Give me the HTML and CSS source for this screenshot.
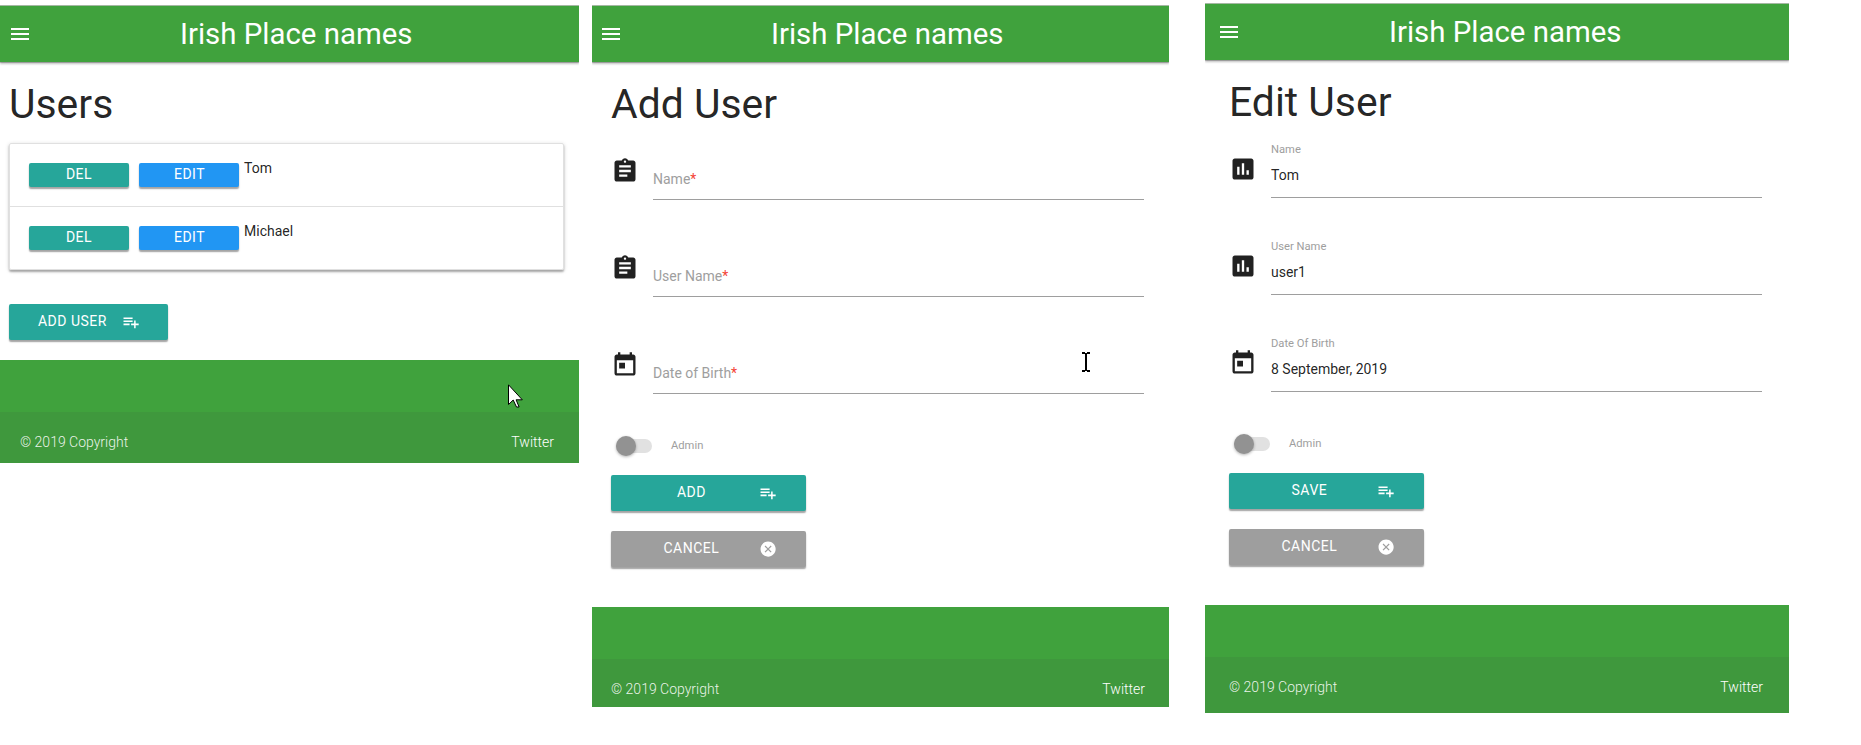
FILE: index.html
```html
<!DOCTYPE html>
<html lang="en">
<head>
<meta charset="utf-8">
<title>Irish Place names</title>
<link rel="stylesheet" href="styles.css">
</head>
<body>
<svg class="sprite" aria-hidden="true">
  <symbol id="menu" viewBox="0 0 24 24"><path d="M3 18h18v-2H3v2zm0-5h18v-2H3v2zm0-7v2h18V6H3z"/></symbol>
  <symbol id="playlist" viewBox="0 0 24 24"><path d="M14 10H2v2h12v-2zm0-4H2v2h12V6zm4 8v-4h-2v4h-4v2h4v4h2v-4h4v-2h-4zM2 16h8v-2H2v2z"/></symbol>
  <symbol id="cancel" viewBox="0 0 24 24"><path d="M12 2C6.47 2 2 6.47 2 12s4.47 10 10 10 10-4.47 10-10S17.53 2 12 2zm4.6 13.5L15.5 16.6 12 13.1 8.5 16.6 7.4 15.5 10.9 12 7.4 8.5 8.5 7.4 12 10.9 15.5 7.4 16.6 8.5 13.1 12 16.6 15.5z"/></symbol>
  <symbol id="assignment" viewBox="0 0 24 24"><path d="M19 3h-4.18C14.4 1.84 13.3 1 12 1c-1.3 0-2.4.84-2.82 2H5c-1.1 0-2 .9-2 2v14c0 1.1.9 2 2 2h14c1.1 0 2-.9 2-2V5c0-1.1-.9-2-2-2zm-7 0c.55 0 1 .45 1 1s-.45 1-1 1-1-.45-1-1 .45-1 1-1zm2 14H7v-2h7v2zm3-4H7v-2h10v2zm0-4H7V7h10v2z"/></symbol>
  <symbol id="assessment" viewBox="0 0 24 24"><path d="M19 3H5c-1.1 0-2 .9-2 2v14c0 1.1.9 2 2 2h14c1.1 0 2-.9 2-2V5c0-1.1-.9-2-2-2zM9 17H7v-7h2v7zm4 0h-2V7h2v10zm4 0h-2v-4h2v4z"/></symbol>
  <symbol id="today" viewBox="0 0 24 24"><path d="M19 3h-1V1h-2v2H8V1H6v2H5c-1.11 0-1.99.9-1.99 2L3 19c0 1.1.89 2 2 2h14c1.1 0 2-.9 2-2V5c0-1.1-.9-2-2-2zm0 16H5V8h14v11zM7 10h5v5H7z"/></symbol>
</svg>
<main class="screens">
  <section class="screen screen-list">
    <header class="nav"><svg class="menu"><use href="#menu"/></svg><span class="brand">Irish Place names</span></header>
    <div class="content">
      <h1>Users</h1>
      <ul class="collection">
        <li><button class="btn small">Del</button><button class="btn small blue">Edit</button><span class="person">Tom</span></li>
        <li><button class="btn small">Del</button><button class="btn small blue">Edit</button><span class="person">Michael</span></li>
      </ul>
      <button class="btn add-user"><span>Add User</span><svg><use href="#playlist"/></svg></button>
    </div>
    <footer><div class="copyright"><span>© 2019 Copyright</span><a>Twitter</a></div></footer>
    <svg class="pointer" viewBox="0 0 15 24"><path d="M.5.8V20.5L5.2 16l3.3 7h2.6l-3-7.2h6.2z"/></svg>
  </section>

  <section class="screen screen-add">
    <header class="nav"><svg class="menu"><use href="#menu"/></svg><span class="brand">Irish Place names</span></header>
    <div class="content">
      <h1>Add User</h1>
      <div class="field"><svg><use href="#assignment"/></svg><div class="input"><span class="placeholder">Name<b>*</b></span></div></div>
      <div class="field"><svg><use href="#assignment"/></svg><div class="input"><span class="placeholder">User Name<b>*</b></span></div></div>
      <div class="field"><svg><use href="#today"/></svg><div class="input"><span class="placeholder">Date of Birth<b>*</b></span></div></div>
      <div class="switch"><i class="lever"></i><span>Admin</span></div>
      <button class="btn wide"><span>Add</span><svg><use href="#playlist"/></svg></button>
      <button class="btn wide grey"><span>Cancel</span><svg><use href="#cancel"/></svg></button>
    </div>
    <footer><div class="copyright"><span>© 2019 Copyright</span><a>Twitter</a></div></footer>
    <svg class="ibeam" viewBox="0 0 8 20"><path d="M0 0h3v1h2V0h3v2H5v16h3v2H5v-1H3v1H0v-2h3V2H0z"/></svg>
  </section>

  <section class="screen screen-edit">
    <header class="nav"><svg class="menu"><use href="#menu"/></svg><span class="brand">Irish Place names</span></header>
    <div class="content">
      <h1>Edit User</h1>
      <div class="field"><svg><use href="#assessment"/></svg><div class="input"><span class="label">Name</span><span class="value">Tom</span></div></div>
      <div class="field"><svg><use href="#assessment"/></svg><div class="input"><span class="label">User Name</span><span class="value">user1</span></div></div>
      <div class="field"><svg><use href="#today"/></svg><div class="input"><span class="label">Date Of Birth</span><span class="value">8 September, 2019</span></div></div>
      <div class="switch"><i class="lever"></i><span>Admin</span></div>
      <button class="btn wide"><span>Save</span><svg><use href="#playlist"/></svg></button>
      <button class="btn wide grey"><span>Cancel</span><svg><use href="#cancel"/></svg></button>
    </div>
    <footer><div class="copyright"><span>© 2019 Copyright</span><a>Twitter</a></div></footer>
  </section>
</main>
</body>
</html>
```
FILE: styles.css
```css
* { box-sizing: border-box; }
body {
  margin: 0;
  background: #fff;
  color: rgba(0, 0, 0, 0.87);
  font: 14px/21px Roboto, sans-serif;
}
.sprite { display: none; }
svg { fill: currentColor; flex: none; }

.screens { display: flex; align-items: flex-start; }
.screen { position: relative; display: flex; flex-direction: column; }
.screen-list { width: 579px; padding-top: 5px; }
.screen-add { width: 577px; margin-left: 13px; padding-top: 5px; }
.screen-edit { width: 584px; margin-left: 36px; padding-top: 3px; }

/* Top bar */
.nav {
  display: flex;
  align-items: center;
  height: 57px;
  padding: 0 0 1px 8px;
  border-top: 1px solid #a5b8a3;
  background: #40a23d;
  color: #fff;
  box-shadow: 0 2px 2px rgba(0, 0, 0, 0.25), 0 1px 0 rgba(0, 0, 0, 0.2);
  clip-path: inset(0 0 -8px 0);
}
.menu { width: 24px; height: 24px; }
.brand { margin-left: 148px; font-size: 29.4px; line-height: 54px; white-space: nowrap; }
.screen-add .nav { padding-left: 7px; }
.screen-edit .nav { padding-left: 12px; }

.content { display: flex; flex-direction: column; align-items: flex-start; }
.screen-list .content { height: 298px; padding: 0 15px 0 9px; }
.screen-add .content { height: 545px; padding: 0 25px 0 19px; }
.screen-edit .content { height: 545px; padding: 0 27px 0 24px; }
h1 { margin: 20px 0 16px; font-size: 40.88px; line-height: 45px; font-weight: 400; white-space: nowrap; }

/* User list */
.collection {
  width: 555px;
  margin: 0 0 34px;
  padding: 0;
  list-style: none;
  border: 1px solid #e0e0e0;
  border-radius: 2px;
  box-shadow: 0 2px 2px rgba(0, 0, 0, 0.28), 0 1px 4px rgba(0, 0, 0, 0.16);
}
.collection li { display: flex; height: 63px; padding: 19px 19px 0; }
.collection li + li { border-top: 1px solid #e0e0e0; height: 63px; }
.collection li:first-child { height: 62px; }
.person { margin: -5px 0 0 5px; }

.btn {
  display: flex;
  align-items: center;
  justify-content: center;
  height: 36px;
  padding: 0;
  border: 0;
  border-radius: 2px;
  background: #26a69a;
  color: #fff;
  font: 14px/34px Roboto, sans-serif;
  letter-spacing: 0.5px;
  text-transform: uppercase;
  box-shadow: 0 2px 2px rgba(0, 0, 0, 0.2), 0 2px 1px rgba(0, 0, 0, 0.2);
}
.btn svg { width: 18.2px; height: 18.2px; }
.small { width: 100px; height: 24px; margin-right: 10px; line-height: 24px; padding-bottom: 2px; }
.blue { margin-right: 0; padding-left: 1px; background: #2196f3; }
.grey { background: #9e9e9e; }
.add-user { width: 159px; gap: 15px; padding-left: 1px; }
.wide { width: 195px; padding: 0 29px 0 28px; }
.wide span { flex: 1; padding-right: 15px; }
.wide + .wide { margin-top: 20px; }
.btn span { margin-top: -2px; }

/* Form rows */
.field { display: flex; align-items: flex-start; align-self: stretch; height: 97px; padding-top: 14px; }
.field svg { width: 28px; height: 28px; }
.input {
  display: flex;
  flex: 1;
  flex-direction: column;
  height: 57px;
  margin: -14px 0 0 14px;
  border-bottom: 1px solid #9e9e9e;
}
.placeholder { margin-top: 26px; color: #9e9e9e; }
.placeholder b { color: #f44336; font-weight: 400; }
.label { margin-top: 2px; height: 14px; color: #9e9e9e; font-size: 11.2px; line-height: 14px; }
.value { margin-top: 8px; }

.switch { display: flex; align-items: center; height: 41px; padding: 0 0 18px 5px; color: #9e9e9e; font-size: 11.2px; }
.lever { position: relative; width: 36px; height: 14px; margin-right: 19px; border-radius: 15px; background: #e1e1e1; }
.lever::before {
  content: "";
  position: absolute;
  left: 0;
  top: -3px;
  width: 20px;
  height: 20px;
  border-radius: 50%;
  background: #929292;
  box-shadow: 0 1px 3px rgba(0, 0, 0, 0.3);
}
.switch span { margin-top: -1px; }

/* Page footer */
footer { padding-top: 52px; background: #40a23d; }
.copyright {
  display: flex;
  justify-content: space-between;
  height: 48px;
  padding: 20px 24px 0 19px;
  background: #3f983d;
  color: rgba(255, 255, 255, 0.9);
  font-weight: 300;
}
.copyright a { color: #fff; }
.screen-list .copyright { height: 51px; padding: 20px 25px 0 20px; }
.screen-edit .copyright { height: 56px; padding: 20px 26px 0 24px; }

/* Mouse cursors */
.pointer { position: absolute; left: 508px; top: 384px; width: 15px; height: 24px; fill: #fff; stroke: #000; }
.ibeam { position: absolute; left: 490px; top: 352px; width: 8px; height: 20px; fill: #000; }
```
